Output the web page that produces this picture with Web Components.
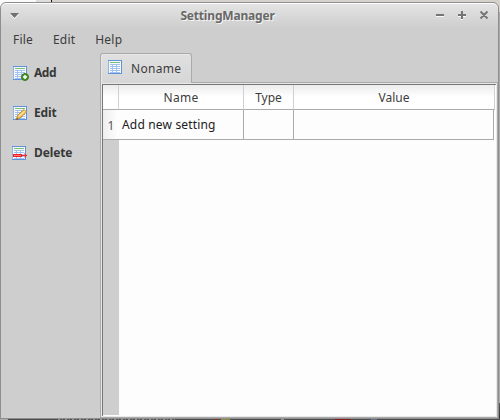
<!DOCTYPE html>
<html lang="en"><head><meta charset="utf-8"><title>SettingManager</title>
<style>
html,body{margin:0;width:500px;height:420px;overflow:hidden}
body{font:12px/16px "Noto Sans","Open Sans",sans-serif;color:#3c3c3c}
</style></head><body>
<desktop-scene>
 <app-window caption="SettingManager">
  <menu-bar slot="menu"><menu-entry>File</menu-entry><menu-entry>Edit</menu-entry><menu-entry>Help</menu-entry></menu-bar>
  <side-tools slot="side">
   <tool-button kind="add">Add</tool-button><tool-button kind="edit">Edit</tool-button><tool-button kind="delete">Delete</tool-button>
  </side-tools>
  <tab-pane caption="Noname"><setting-table></setting-table></tab-pane>
 </app-window>
</desktop-scene>
<script>
const define=(name,markup,setup)=>customElements.define(name,class extends HTMLElement{
 constructor(){super();const t=document.createElement('template');t.innerHTML=markup;
 this.attachShadow({mode:'open'}).append(t.content.cloneNode(true));}
 connectedCallback(){if(setup)setup(this,this.shadowRoot);}
});

define('desktop-scene',`<style>
:host{display:block;box-sizing:border-box;width:500px;height:420px;padding-top:2px;
background:
linear-gradient(#aaa,#aaa) 0 418px/8px 2px no-repeat,
linear-gradient(#8b1510,#8b1510) 335px 418px/16px 2px no-repeat,
linear-gradient(#8c8c45,#8c8c45) 221px 418px/9px 2px no-repeat,
linear-gradient(#8b2a12,#8b2a12) 215px 418px/3px 2px no-repeat,
linear-gradient(#68708e,#68708e) 371px 418px/6px 2px no-repeat,
linear-gradient(#999,#999) 281px 418px/3px 2px no-repeat,
repeating-linear-gradient(90deg,#999 0 2px,#555 2px 4px,#777 4px 5px,#4c4c4c 5px 7px) 58px 418px/118px 2px no-repeat,
linear-gradient(#4b4b4b,#4b4b4b) 0 418px/500px 2px no-repeat,
linear-gradient(#555,#333) 499px 403px/1px 15px no-repeat,
linear-gradient(#aaa,#aaa) 499px 12px/1px 391px no-repeat,
linear-gradient(90deg,#fafafa 0 36px,#dedede 36px 51px,#111 51px 52px,#d5d1cb 52px)}
</style><slot></slot>`);

define('app-window',`<style>
:host{display:grid;box-sizing:border-box;width:499px;height:417px;grid-template:29px 21px 1fr/99px 1fr;
border:1px solid #8e8e8e;border-radius:6px 6px 0 0;background:linear-gradient(#e4e4e4,#cecece 25px);box-shadow:inset 0 1px #fff;overflow:hidden}
header{grid-column:1/3;display:grid;grid-template-columns:28px 1fr auto;align-items:center;padding-right:6px}
header svg{display:block}
h1{margin:0;padding:0 10px 3px 0;font:bold 12px/16px "Noto Sans",sans-serif;color:#686868;text-shadow:1px 1px #f4f4f4;text-align:center;letter-spacing:-.18px}
.menu{grid-column:1/3}
</style><header><svg width="28" height="29"><path d="M9 11h9l-4.500 5z" fill="#fff"/><path d="M9 10h9l-4.500 5z" fill="#707070"/></svg><h1></h1>
<svg width="56" height="29" fill="none" stroke-width="2"><g stroke="#fafafa"><path d="M0 13h8M22 13h8M26 9v8M45 9l6 6M51 9l-6 6"/></g><g stroke="#747474"><path d="M0 12h8M22 12h8M26 8v8M44.500 8.500l7 7M51.500 8.500l-7 7"/></g></svg></header>
<div class="menu"><slot name="menu"></slot></div><slot name="side"></slot><slot></slot>`,
(el,r)=>r.querySelector('h1').textContent=el.getAttribute('caption'));

define('menu-bar',`<style>:host{display:flex;gap:20px;padding:0 12px;letter-spacing:.2px}</style><slot></slot>`);
define('menu-entry',`<style>:host{display:block}</style><slot></slot>`);
define('side-tools',`<style>:host{display:flex;flex-direction:column;gap:24px;padding:12px 0 0 11px}</style><slot></slot>`);

const sheet=`<rect width="14" height="14" fill="#5f92da"/><rect x="1" y="1" width="12" height="12" fill="#f4f8ff"/><path d="M2 2.500h10" stroke="#7cc06e"/><rect x="2" y="4" width="10" height="9" fill="#a3c1ef"/><path d="M2 5.500h10M2 7.500h10M2 9.500h10M2 11.500h10" stroke="#fff" stroke-dasharray="2 1 3 1 3"/><path d="M.5 1v12" stroke="#8db4ea"/>`;
const badges={
 add:`<circle cx="11.500" cy="12" r="3.500" fill="#4b9527" stroke="#397a1c"/><path d="M9.500 12h4M11.500 10v4" stroke="#fff" stroke-width="1.500"/>`,
 edit:`<path d="M3.500 14.500l1-4 6.500-6 2.500 2.500-6.500 6z" fill="#f5c258" stroke="#c58a2c"/><path d="M6 11l6-5" stroke="#ffe39b" stroke-width="1.500"/><path d="M3 15l1-2 1.500 1z" fill="#604a30"/>`,
 delete:`<path d="M1 10.500h9" stroke="#ed2024" stroke-width="3"/><path d="M2 10.500h7" stroke="#ff7777"/><path d="M10 10.500h5" stroke="#f02a32"/><path d="M12.500 8l2.500 2.500-2.500 2.500z" fill="#f02a32"/>`};
define('tool-button',`<style>:host{display:flex;align-items:center;height:16px;font-weight:bold;color:#383838;letter-spacing:-.12px}
svg{display:block;flex:none;width:17px;height:16px;margin-right:5px;overflow:visible}</style><svg></svg><slot></slot>`,
(el,r)=>{const k=el.getAttribute('kind');if(k==='add')el.style.letterSpacing='-.5px';const x=k==='delete'?0:1;
r.querySelector('svg').innerHTML=`<g transform="translate(${x} 1)">${sheet}</g><g transform="translate(${k==='add'?1.5:x} 0)" fill="none">${badges[k]}</g>`;});

define('tab-pane',`<style>
:host{display:grid;grid-template-rows:30px 1fr;min-height:0}
.tab{z-index:1;box-sizing:border-box;width:92px;height:30px;display:flex;align-items:center;gap:9px;padding:0 0 0 7px;border:1px solid #aaa;border-bottom:0;border-radius:3px 3px 0 0;background:linear-gradient(#e0e0e0,#d6d6d6);box-shadow:inset 1px 1px #e8e8e8;letter-spacing:.3px}
svg{display:block;width:14px;height:14px;margin-bottom:3px}
.pane{box-sizing:border-box;min-height:0;margin-top:-1px;border:1px solid #aaa;padding:1px;background:#e8e8e8}
</style><div class="tab"><svg>${sheet}</svg><span></span></div><div class="pane"><slot></slot></div>`,
(el,r)=>r.querySelector('span').textContent=el.getAttribute('caption'));

define('setting-table',`<style>
:host{display:grid;box-sizing:border-box;height:100%;grid-template:25px 30px 1fr/16px 125px 50px 201px 1fr;border:solid #777;border-width:1px 0 0 1px;background:#fdfdfd;color:#3c3c3c}
div{box-sizing:border-box;display:flex;align-items:center;justify-content:center;border:solid #aaa;border-width:0 1px 1px 0}
.h{background:linear-gradient(#ececec,#fff 12px);border-right-color:#d0d0d0;padding-top:2px}
.c{color:#202020;letter-spacing:.17px}.n{justify-content:flex-start;padding-left:3px}
.num{border-right:0;background:linear-gradient(90deg,#eee,#fff);color:#555;padding-top:2px}
.v{margin-right:1px}.rest{background:#cecece;border:0;margin-bottom:1px}
</style><div class="h"></div><div class="h" style="letter-spacing:.3px">Name</div><div class="h">Type</div><div class="h">Value</div><i></i>
<div class="num">1</div><div class="c n">Add new setting</div><div class="c"></div><div class="c v"></div><i></i><div class="rest"></div>`);
</script></body></html>
